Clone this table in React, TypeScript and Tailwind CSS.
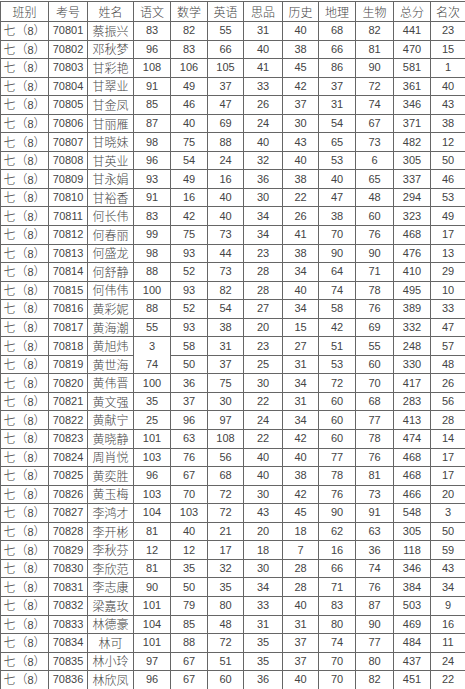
import React from "react";

const headers = ["班别", "考号", "姓名", "语文", "数学", "英语", "思品", "历史", "地理", "生物", "总分", "名次"];
const widths = [48, 39, 46, 37, 37, 36, 39, 36, 37, 38, 37, 35];

const rows: [string, string, ...number[]][] = [
  ["70801", "蔡振兴", 83, 82, 55, 31, 40, 68, 82, 441, 23],
  ["70802", "邓秋梦", 96, 83, 66, 40, 38, 66, 81, 470, 15],
  ["70803", "甘彩艳", 108, 106, 105, 41, 45, 86, 90, 581, 1],
  ["70804", "甘翠业", 91, 49, 37, 33, 42, 37, 72, 361, 40],
  ["70805", "甘金凤", 85, 46, 47, 26, 37, 31, 74, 346, 43],
  ["70806", "甘丽雁", 87, 40, 69, 24, 30, 54, 67, 371, 38],
  ["70807", "甘晓妹", 98, 75, 88, 40, 43, 65, 73, 482, 12],
  ["70808", "甘英业", 96, 54, 24, 32, 40, 53, 6, 305, 50],
  ["70809", "甘永娟", 93, 49, 16, 36, 38, 40, 65, 337, 46],
  ["70810", "甘裕香", 91, 16, 40, 30, 22, 47, 48, 294, 53],
  ["70811", "何长伟", 83, 42, 40, 34, 26, 38, 60, 323, 49],
  ["70812", "何春丽", 99, 75, 73, 34, 41, 70, 76, 468, 17],
  ["70813", "何盛龙", 98, 93, 44, 23, 38, 90, 90, 476, 13],
  ["70814", "何舒静", 88, 52, 73, 28, 34, 64, 71, 410, 29],
  ["70815", "何伟伟", 100, 93, 82, 28, 40, 74, 78, 495, 10],
  ["70816", "黄彩妮", 88, 52, 54, 27, 34, 58, 76, 389, 33],
  ["70817", "黄海潮", 55, 93, 38, 20, 15, 42, 69, 332, 47],
  ["70818", "黄旭炜", 3, 58, 31, 23, 27, 51, 55, 248, 57],
  ["70819", "黄世海", 74, 50, 37, 25, 31, 53, 60, 330, 48],
  ["70820", "黄伟晋", 100, 36, 75, 30, 34, 72, 70, 417, 26],
  ["70821", "黄文强", 35, 37, 30, 22, 31, 60, 68, 283, 56],
  ["70822", "黄献宁", 25, 96, 97, 24, 34, 60, 77, 413, 28],
  ["70823", "黄晓静", 101, 63, 108, 22, 42, 60, 78, 474, 14],
  ["70824", "周肖悦", 103, 76, 56, 40, 40, 77, 76, 468, 17],
  ["70825", "黄奕胜", 96, 67, 68, 40, 38, 78, 81, 468, 17],
  ["70826", "黄玉梅", 103, 70, 72, 30, 42, 76, 73, 466, 20],
  ["70827", "李鸿才", 104, 103, 72, 43, 45, 90, 91, 548, 3],
  ["70828", "李开彬", 81, 40, 21, 20, 18, 62, 63, 305, 50],
  ["70829", "李秋芬", 12, 12, 17, 18, 7, 16, 36, 118, 59],
  ["70830", "李欣范", 81, 35, 32, 30, 28, 66, 74, 346, 43],
  ["70831", "李志康", 90, 50, 35, 34, 28, 71, 76, 384, 34],
  ["70832", "梁嘉玫", 101, 79, 80, 33, 40, 83, 87, 503, 9],
  ["70833", "林德豪", 104, 85, 48, 31, 31, 80, 90, 469, 16],
  ["70834", "林可", 101, 88, 72, 35, 37, 74, 77, 484, 11],
  ["70835", "林小玲", 97, 67, 51, 35, 37, 70, 80, 437, 24],
  ["70836", "林欣凤", 96, 67, 60, 36, 40, 70, 82, 451, 22],
];

const cjk = "font-['Noto_Sans_CJK_SC',sans-serif] text-[12px] font-light";
const num = "font-['Liberation_Sans',sans-serif] text-[11px]";

export default function App() {
  return (
    <div className="w-[465px] h-[689px] bg-white pt-px text-[#444]">
      <table className="table-fixed border-collapse border border-[#555] w-[464px]">
        <colgroup>
          {widths.map((w, i) => (
            <col key={i} style={{ width: w }} />
          ))}
        </colgroup>
        <thead>
          <tr className="h-[20px]">
            {headers.map((h) => (
              <th key={h} className={`border border-[#666] p-0 text-center align-middle ${cjk}`}>
                {h}
              </th>
            ))}
          </tr>
        </thead>
        <tbody>
          {rows.map(([id, name, ...scores]) => (
            <tr key={id} className="h-[18.55px]">
              <td className={`border border-[#666] p-0 text-center leading-none ${cjk}`}>
                七（<span className={num}>8</span>）
              </td>
              <td className={`border border-[#666] p-0 text-center leading-none ${num}`}>{id}</td>
              <td className={`border border-[#666] p-0 text-center leading-none ${cjk}`}>{name}</td>
              {scores.map((s, i) => (
                <td
                  key={i}
                  className={`border border-[#666] p-0 text-center leading-none ${num} ${
                    i === 0 && id === "70818" ? "border-b-transparent" : ""
                  }`}
                >
                  {s}
                </td>
              ))}
            </tr>
          ))}
        </tbody>
      </table>
    </div>
  );
}
